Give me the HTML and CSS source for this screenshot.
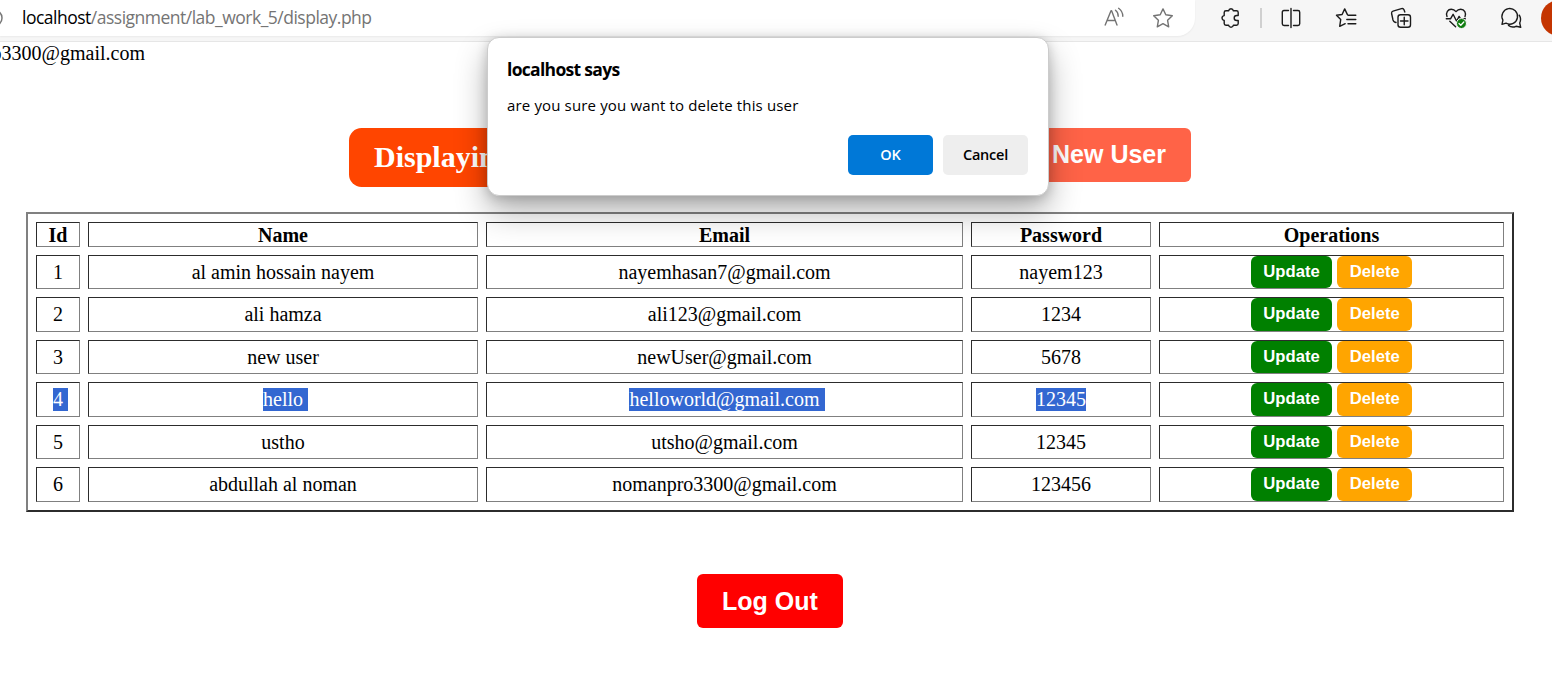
FILE: index.html
```html
<!DOCTYPE html>
<html lang="en">
<head>
<meta charset="utf-8">
<title>display.php</title>
<link rel="stylesheet" href="styles.css">
</head>
<body>
<header class="toolbar">
  <div class="address">
    <svg class="info" viewBox="0 0 16 18"><circle cx="-6" cy="9" r="8"/></svg>
    <span class="url"><b>localhost</b>/assignment/lab_work_5/display.php</span>
    <svg class="icon soft" viewBox="0 0 20 20"><path d="M1.2 17 7 2.8h.6L13 17M3.2 12.5h8M11.5 2.2q2.7 2 2.7 6M14.6.3q4.2 3 4.2 8"/></svg>
    <svg class="icon soft star" viewBox="0 0 20 20"><path d="m10 .9 2.8 5.9 6.5.9-4.7 4.6 1.1 6.5-5.7-3.1-5.7 3.1 1.1-6.5L.7 7.7l6.5-.9z"/></svg>
  </div>
  <svg class="icon puzzle" viewBox="0 0 20 20"><path d="M5 2.8h2.6Q8 .7 10 .7t2.4 2.1h3.1q1.7 0 1.7 1.7v3h-1.500a2.500 2.500 0 0 0 0 5h1.500v3q0 1.700-1.700 1.700h-3.100Q12 19.300 10 19.300t-2.400-2.100H5q-1.800 0-1.800-1.700v-3Q1 12 1 10t2.200-2.400V4.500Q3.200 2.800 5 2.800z"/></svg>
  <span class="divider"></span>
  <svg class="icon" viewBox="0 0 20 20"><path d="M10 .5v19M7.500 2.500H3q-1.700 0-1.700 1.700v11.600q0 1.700 1.700 1.700h4.500M12.500 2.500H17q1.700 0 1.700 1.700v11.600q0 1.700-1.700 1.700h-4.500"/></svg>
  <svg class="icon" viewBox="0 0 20 20"><path d="M11.300 6.400 8.700.9 6.100 6.500.5 7.300l4.200 4.300-1 6.800 5.500-2.700M12 7.200h7.800M10.800 11.500h9M12 15.700h7.800"/></svg>
  <svg class="icon" viewBox="0 0 20 20"><rect x="7" y="6.700" width="12.500" height="12.500" rx="2.500"/><path d="M13.250 9.200v7.500M9.500 12.950h7.500M5 14.500l-1.400-.5Q2.500 13.500 2 12L.6 5.500Q.2 3.800 2 3.200L10.500.7q1.800-.5 2.500 1L13.800 4"/></svg>
  <svg class="icon" viewBox="0 0 20 20"><path d="M1 8.500C-.5 4.500 2 1.200 5.300 1.200Q8 1.200 10 3.600 12 1.200 14.700 1.200C18.500 1.200 20.500 5 19 8.700M.3 10.800h4.200l2.600-4.500 3.500 7 2.500-4.900 1.500 2.400h4.700M3.800 13.200l5.800 5.500"/><circle class="ok" cx="15.500" cy="15.500" r="5"/><path class="tick" d="m13 15.500 1.800 1.700 3-3.200"/></svg>
  <svg class="icon" viewBox="0 0 20 20"><path d="M1 16.300l.9-4.200A7.800 7.800 0 1 1 5 15.200zM7.500 17.400q3.500 2.800 7.500.9l4.700 1-1-4.300q1.900-3.800-.4-7.800"/></svg>
  <span class="avatar"></span>
</header>
<main class="page">
  <p class="account">o3300@gmail.com</p>
  <div class="heading">
    <h2 class="title">Displaying</h2>
    <a class="big-button add">New User</a>
  </div>
  <div class="table">
    <div class="row head"><div>Id</div><div>Name</div><div>Email</div><div>Password</div><div>Operations</div></div>
    <div class="row"><div>1</div><div>al amin hossain nayem</div><div>nayemhasan7@gmail.com</div><div>nayem123</div><div class="ops"><a class="update">Update</a><a class="delete">Delete</a></div></div>
    <div class="row"><div>2</div><div>ali hamza</div><div>ali123@gmail.com</div><div>1234</div><div class="ops"><a class="update">Update</a><a class="delete">Delete</a></div></div>
    <div class="row"><div>3</div><div>new user</div><div>newUser@gmail.com</div><div>5678</div><div class="ops"><a class="update">Update</a><a class="delete">Delete</a></div></div>
    <div class="row selected"><div><span class="tail">4</span></div><div><span class="tail">hello</span></div><div><span class="tail">helloworld@gmail.com</span></div><div><span>12345</span></div><div class="ops"><a class="update">Update</a><a class="delete">Delete</a></div></div>
    <div class="row"><div>5</div><div>ustho</div><div>utsho@gmail.com</div><div>12345</div><div class="ops"><a class="update">Update</a><a class="delete">Delete</a></div></div>
    <div class="row"><div>6</div><div>abdullah al noman</div><div>nomanpro3300@gmail.com</div><div>123456</div><div class="ops"><a class="update">Update</a><a class="delete">Delete</a></div></div>
  </div>
  <a class="big-button logout">Log Out</a>
</main>
<section class="dialog">
  <h1>localhost says</h1>
  <p>are you sure you want to delete this user</p>
  <div class="actions"><button class="primary">OK</button><button>Cancel</button></div>
</section>
</body>
</html>
```
FILE: styles.css
```css
* { box-sizing: border-box; }
body {
  margin: 0;
  height: 682px;
  overflow: hidden;
  background: #fff;
  color: #000;
  font: 20px/23px "Liberation Serif", serif;
}
.toolbar {
  display: flex;
  align-items: flex-start;
  width: 1600px;
  height: 42px;
  background: #f6f6f6;
  border-bottom: 1px solid #e6e6e6;
}
.address {
  display: flex;
  align-items: flex-start;
  width: 1195px;
  height: 36px;
  margin-right: 26px;
  background: #fff;
  border-radius: 0 0 18px 0;
  box-shadow: 0 1px 2px #0000000d;
}
.info { width: 16px; height: 18px; margin: 9px 6px 0 0; fill: none; stroke: #777; stroke-width: 1.5; }
.url {
  flex: 1;
  padding-top: 5px;
  color: #747474;
  font: 17.5px/24px "Open Sans", sans-serif;
  letter-spacing: -0.5px;
}
.url b { color: #000; font-weight: 400; }
.icon {
  flex: none;
  width: 20px;
  height: 20px;
  margin: 8px 35px 0 0;
  overflow: visible;
  fill: none;
  stroke: #1b1b1b;
  stroke-width: 1.4;
  stroke-linejoin: round;
  stroke-linecap: round;
}
.soft { stroke: #737373; margin-right: 29px; }
.star { margin-right: 22px; }
.address .star:last-child { margin-right: 22px; }
.puzzle { margin-right: 19px; }
.divider { width: 2px; height: 20px; margin: 8px 19px 0 0; background: #d0d0d0; }
.toolbar > .icon:last-of-type { margin-right: 20px; }
.ok { fill: #107c10; stroke: #f6f6f6; stroke-width: 1; }
.tick { stroke: #fff; stroke-width: 1.3; }
.avatar { flex: none; width: 36px; height: 36px; border-radius: 50%; background: #c43501; }
.page { display: flex; flex-direction: column; align-items: flex-start; }
.account {
  display: flex;
  justify-content: flex-end;
  width: 145px;
  height: 23px;
  margin: 0 0 63px;
}
.heading {
  display: flex;
  justify-content: space-between;
  align-items: flex-start;
  width: 842px;
  height: 59px;
  margin: 0 0 25px 349px;
}
.title {
  width: 200px;
  height: 59px;
  margin: 0;
  padding-left: 25px;
  border-radius: 12.5px;
  background: #ff4500;
  color: #fff;
  font-size: 30px;
  line-height: 57px;
}
.big-button {
  height: 54px;
  padding: 0 25px;
  border-radius: 6px;
  color: #fff;
  font: bold 25px/54px "Liberation Sans", sans-serif;
}
.add { background: #ff6347; line-height: 52px; }
.logout { margin: 62px 0 0 697px; background: #f00; }
.table {
  display: grid;
  gap: 8px;
  width: 1488px;
  height: 300px;
  margin-left: 26px;
  padding: 8px;
  border: 2px solid;
  border-color: #808080 #2c2c2c #2c2c2c #808080;
  grid-template-rows: 25px repeat(3, 34px 35px);
}
.row {
  display: grid;
  grid-template-columns: 44px 390px 477px 180px 345px;
  gap: 8px;
}
.row > div {
  display: flex;
  align-items: center;
  justify-content: center;
  border: 1px solid;
  border-color: #2c2c2c #808080 #808080 #2c2c2c;
}
.row.head > div { height: 25px; line-height: 25px; font-weight: 700; align-items: flex-start; }
.selected span { background: #3367d1; color: #fff; }
.selected .tail { margin-right: -5px; padding-right: 5px; }
.row > .ops { align-items: stretch; gap: 5px; }
.ops a {
  padding: 0 12.5px;
  border-radius: 6px;
  color: #fff;
  font: bold 16.67px/32px "Liberation Sans", sans-serif;
}
.update { background: #008000; }
.delete { background: #ffa500; }
.dialog {
  position: absolute;
  left: 487px;
  top: 37px;
  width: 562px;
  height: 159px;
  padding: 20px 20px 20px 19px;
  border: 1px solid #ccc;
  border-radius: 12px;
  background: #fff;
  box-shadow: 0 16px 32px #0000004d, 0 2px 12px #00000030;
  font-family: "Open Sans", sans-serif;
}
.dialog h1 { margin: 0 0 12px; font-size: 17.5px; line-height: 23px; height: 24px; letter-spacing: -0.7px; font-weight: 700; }
.dialog p { margin: 0 0 18px; font-size: 15px; line-height: 23px; letter-spacing: 0.15px; }
.actions { display: flex; justify-content: flex-end; gap: 10px; }
.actions button {
  width: 85px;
  height: 40px;
  padding: 0 0 2px;
  border: 0;
  border-radius: 5px;
  background: #eee;
  color: #000;
  font: 600 14.5px "Open Sans", sans-serif;
  letter-spacing: -0.2px;
}
.actions .primary { background: #0078d7; color: #fff; }
```
